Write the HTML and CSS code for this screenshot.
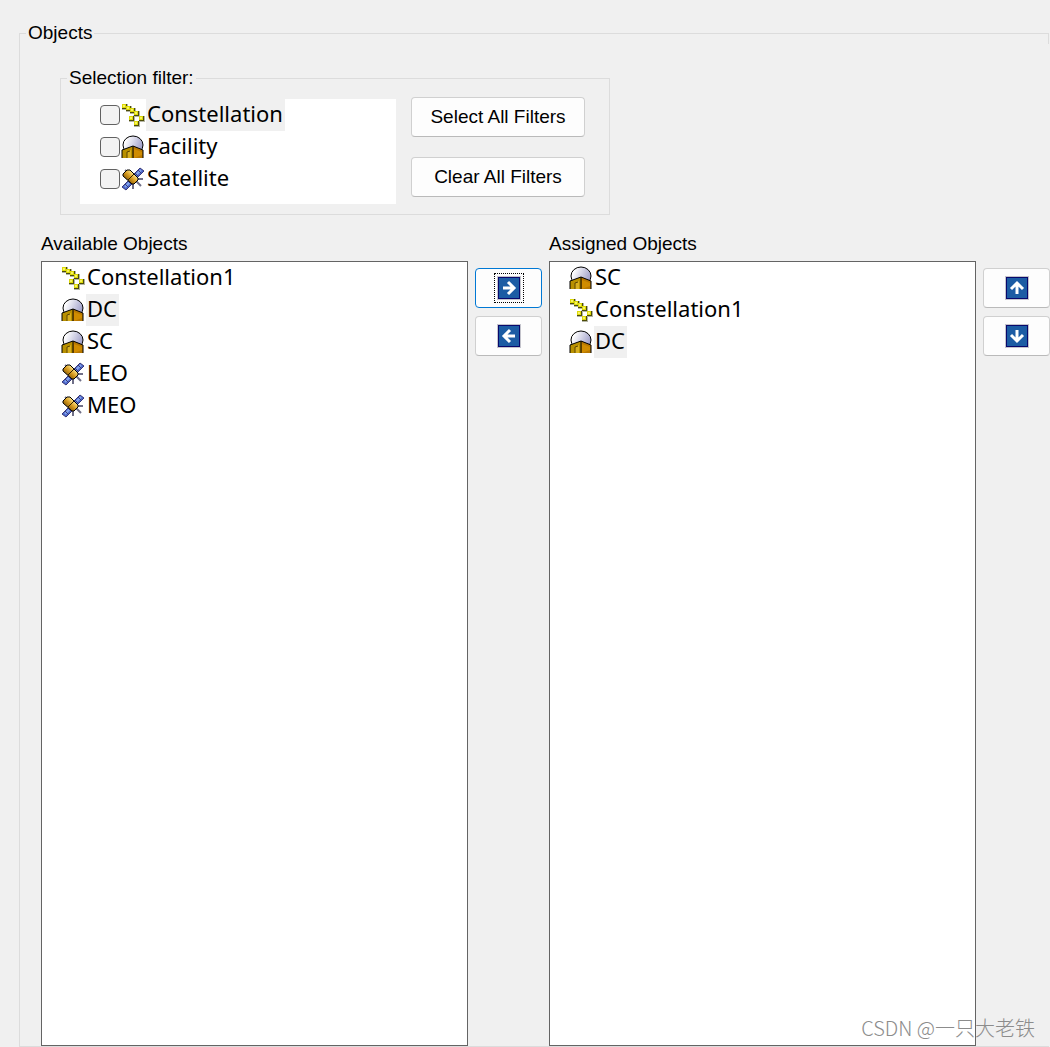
FILE: index.html
```html
<!DOCTYPE html>
<html lang="en">

<head>
  <meta charset="UTF-8" />
  <meta name="viewport" content="width=device-width, initial-scale=1.0" />
  <title>Objects</title>
  <link rel="stylesheet" href="styles.css">
</head>

<body>
  <!-- Shared icons -->
  <svg class="defs" width="0" height="0" aria-hidden="true">
    <defs>
      <linearGradient id="domeFill" x1="0" y1="0" x2="1" y2="0.4">
        <stop offset="0.2" stop-color="#fff" />
        <stop offset="1" stop-color="#a4a4cc" />
      </linearGradient>
      <linearGradient id="bodyFill" x1="0" y1="1" x2="1" y2="0">
        <stop offset="0.2" stop-color="#7c5000" />
        <stop offset="0.5" stop-color="#d89c20" />
        <stop offset="0.75" stop-color="#ffe890" />
      </linearGradient>
      <g id="star">
        <path d="M0 0h6v6h-6z" fill="#b4b4a4" />
        <path d="M0 0h5v5h-5z" fill="#4c4c08" />
        <path d="M0 0h4v4h-4z" fill="#dcd808" />
        <path d="M1 1h2v2h-2z" fill="#f8f460" />
      </g>
      <symbol id="constellation" viewBox="0 0 24 24">
        <path d="M10 15l5-4 6 4-6 6z" fill="none" stroke="#b4b4b4" />
        <use href="#star" x="1" y="1" />
        <use href="#star" x="5" y="3" />
        <use href="#star" x="9" y="5" />
        <use href="#star" x="13" y="8" />
        <use href="#star" x="8" y="13" />
        <use href="#star" x="18" y="13" />
        <use href="#star" x="13" y="18" />
      </symbol>
      <symbol id="facility" viewBox="0 0 24 24">
        <ellipse cx="12" cy="10" rx="10" ry="9" fill="url(#domeFill)" stroke="#000" />
        <path d="M1 15l11-4v12H1z" fill="#b89000" />
        <path d="M12 11l10 4v8H12z" fill="#b87800" />
        <path d="M13 14l8 3v3l-8 3z" fill="#d08c00" />
        <path d="M6 23v-6l4-2v8z" fill="#d8b020" />
        <path d="M6 23v-6l3-1" fill="none" stroke="#5c4400" />
        <path d="M1 23v-8l11-4 10 4v8M12 11v12" fill="none" stroke="#000" />
      </symbol>
      <symbol id="satellite" viewBox="0 0 24 24">
        <path d="M4 3l4 3M12 15v7M15 14l5 5M16 12h6M8 15v4" fill="none" stroke="#707088" stroke-width="2" />
        <path d="M12 8l7-7 4 3-8 8zM1 20l8-8 4 3-8 8z" fill="#4c68cc" stroke="#383878" />
        <path d="M15 8l5-5M4 20l5-5" fill="none" stroke="#84a4ec" stroke-width="2" />
        <path d="M17 3l3 3M14 6l3 3M4 17l3 3M7 14l3 3" fill="none" stroke="#383878" />
        <path d="M2 7l4-4h3l8 8v2l-4 4h-2L2 9z" fill="url(#bodyFill)" stroke="#000" />
        <path d="M7 13l6-6" fill="none" stroke="#302000" />
      </symbol>
      <symbol id="arrow" viewBox="0 0 24 24">
        <path d="M0 0h24v24H0z" fill="#c4c4cc" />
        <path d="M1 1h22v22H1z" fill="#08086c" />
        <path d="M2 2h20v20H2z" fill="#1c5ca4" />
        <path d="M6 12h10M11 6l6 6-6 6" fill="none" stroke="#fff" stroke-width="3" />
      </symbol>
    </defs>
  </svg>

  <fieldset class="objects">
    <legend>Objects</legend>
    <div class="content">
      <fieldset class="filter">
        <legend>Selection filter:</legend>
        <div class="filter-body">
          <ul class="filter-list">
            <li><label class="item"><input type="checkbox"><svg class="icon"><use href="#constellation" /></svg><span class="name current">Constellation</span></label></li>
            <li><label class="item"><input type="checkbox"><svg class="icon"><use href="#facility" /></svg><span class="name">Facility</span></label></li>
            <li><label class="item"><input type="checkbox"><svg class="icon"><use href="#satellite" /></svg><span class="name">Satellite</span></label></li>
          </ul>
          <div class="filter-buttons">
            <button type="button">Select All Filters</button>
            <button type="button">Clear All Filters</button>
          </div>
        </div>
      </fieldset>

      <div class="columns">
        <div class="column">
          <div class="title" id="availableLabel">Available Objects</div>
          <ul class="list" role="listbox" aria-labelledby="availableLabel">
            <li class="item" role="option"><svg class="icon"><use href="#constellation" /></svg><span class="name">Constellation1</span></li>
            <li class="item" role="option"><svg class="icon"><use href="#facility" /></svg><span class="name current">DC</span></li>
            <li class="item" role="option"><svg class="icon"><use href="#facility" /></svg><span class="name">SC</span></li>
            <li class="item" role="option"><svg class="icon"><use href="#satellite" /></svg><span class="name">LEO</span></li>
            <li class="item" role="option"><svg class="icon"><use href="#satellite" /></svg><span class="name">MEO</span></li>
          </ul>
        </div>
        <div class="arrows">
          <button type="button" class="active" aria-label="Assign"><span class="focus"><svg class="arrow"><use href="#arrow" /></svg></span></button>
          <button type="button" aria-label="Remove"><svg class="arrow left"><use href="#arrow" /></svg></button>
        </div>
        <div class="column">
          <div class="title" id="assignedLabel">Assigned Objects</div>
          <ul class="list" role="listbox" aria-labelledby="assignedLabel">
            <li class="item" role="option"><svg class="icon"><use href="#facility" /></svg><span class="name">SC</span></li>
            <li class="item" role="option"><svg class="icon"><use href="#constellation" /></svg><span class="name">Constellation1</span></li>
            <li class="item" role="option"><svg class="icon"><use href="#facility" /></svg><span class="name current">DC</span></li>
          </ul>
        </div>
        <div class="arrows">
          <button type="button" aria-label="Move up"><svg class="arrow up"><use href="#arrow" /></svg></button>
          <button type="button" aria-label="Move down"><svg class="arrow down"><use href="#arrow" /></svg></button>
        </div>
      </div>
    </div>
  </fieldset>

  <div class="watermark">CSDN @一只大老铁</div>
</body>

</html>
```
FILE: styles.css
```css
* {
  box-sizing: border-box;
}

body {
  position: relative;
  margin: 0;
  padding: 22px 1px 0 19px;
  background-color: #f0f0f0;
  color: #000;
  font-family: "Liberation Sans", Arial, sans-serif;
  font-size: 19px;
  line-height: 22px;
}

ul {
  list-style: none;
  margin: 0;
  padding: 0;
}

.defs {
  position: absolute;
}

fieldset {
  margin: 0;
  border: 1px solid #dcdcdc;
}

legend {
  padding: 0 2px;
}

.objects {
  min-width: 0;
  padding: 0 0 0 6px;
}

/* covers the right edge of the group box */
.content {
  display: flex;
  flex-direction: column;
  min-height: calc(100vh - 45px);
  margin-right: -2px;
  padding: 23px 0 0 15px;
  background-color: #f0f0f0;
}

.filter {
  align-self: flex-start;
  margin-left: 19px;
  padding: 8px 24px 10px 6px;
}

.filter-body {
  display: flex;
  gap: 15px;
  padding-left: 13px;
}

.filter-list {
  width: 316px;
  margin-top: 2px;
  padding: 0 20px 9px;
  background: #fff;
}

.item {
  display: flex;
  align-items: center;
  height: 32px;
}

.item input {
  appearance: none;
  width: 20px;
  height: 20px;
  margin: 0 1px 0 0;
  border: 1px solid #626262;
  border-radius: 4px;
  background: #f3f3f3;
}

.item input:checked {
  background: #0067c0;
}

.icon {
  width: 24px;
  height: 24px;
  margin-right: 1px;
}

.name {
  height: 32px;
  padding: 0 2px 0 1px;
  font-family: "Noto Sans", sans-serif;
  font-size: 22px;
  line-height: 28px;
}

.current {
  background: #f0f0f0;
}

button {
  display: flex;
  align-items: center;
  justify-content: center;
  height: 40px;
  padding: 0;
  border: 1px solid #d0d0d0;
  border-bottom-color: #bababa;
  border-radius: 4px;
  background: #fdfdfd;
  color: #000;
  font: inherit;
}

button:hover {
  background: #e0eef9;
}

.filter-buttons {
  display: flex;
  flex-direction: column;
  gap: 20px;
}

.filter-buttons button {
  width: 174px;
}

.columns {
  flex: 1;
  display: grid;
  grid-template-columns: 1fr 67px 1fr 67px;
  gap: 7px;
  padding-top: 18px;
}

.column {
  display: flex;
  flex-direction: column;
}

.title {
  margin-bottom: 6px;
}

.list {
  flex: 1;
  padding: 0 19px;
  border: 1px solid #646464;
  background: #fff;
}

.arrows {
  display: flex;
  flex-direction: column;
  gap: 8px;
  padding-top: 35px;
}

.arrows .active {
  border-color: #0078d4;
}

.focus {
  display: flex;
  padding: 2px;
  border: 1px dotted #000;
}

.arrow {
  width: 24px;
  height: 24px;
}

.left {
  transform: rotate(180deg);
}

.up {
  transform: rotate(-90deg);
}

.down {
  transform: rotate(90deg);
}

.watermark {
  position: absolute;
  right: 15px;
  bottom: 6px;
  color: #8c8c8c;
  font-family: "Noto Sans CJK SC", sans-serif;
  font-size: 20px;
  font-weight: 300;
  line-height: 26px;
}
```
